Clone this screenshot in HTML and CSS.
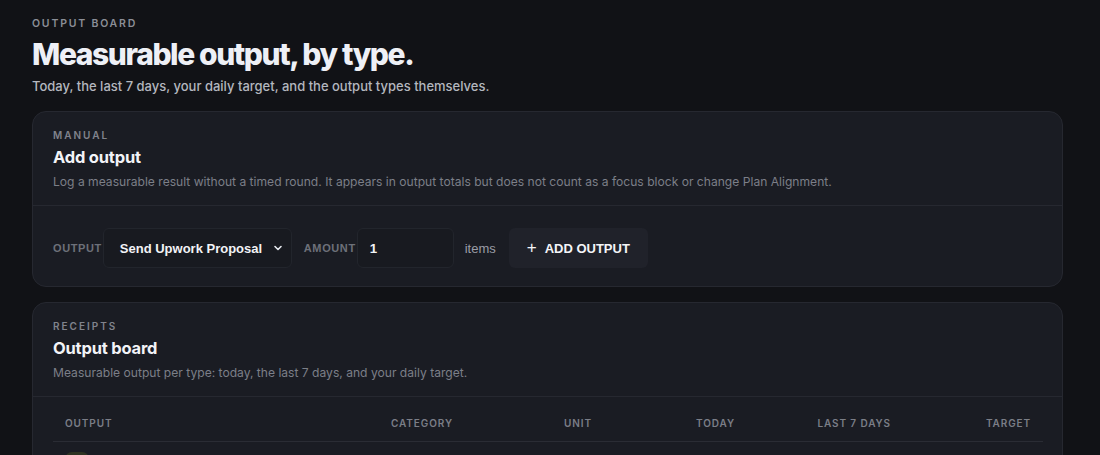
FILE: index.html
```html
<!DOCTYPE html>
<html lang="en">
<head>
<meta charset="utf-8">
<title>Output board</title>
<link rel="stylesheet" href="styles.css">
</head>
<body>
<main class="page">
  <header class="page-head">
    <div class="eyebrow">OUTPUT BOARD</div>
    <h1 class="title">Measurable output, by type.</h1>
    <p class="subtitle">Today, the last 7 days, your daily target, and the output types themselves.</p>
  </header>

  <section class="card">
    <div class="card-head">
      <div class="eyebrow small">MANUAL</div>
      <h2 class="card-title">Add output</h2>
      <p class="card-desc">Log a measurable result without a timed round. It appears in output totals but does not count as a focus block or change Plan Alignment.</p>
    </div>
    <div class="card-body form-row">
      <label class="field-label">OUTPUT</label>
      <div class="select">
        <span>Send Upwork Proposal</span>
        <svg class="chev" width="10" height="10" viewBox="0 0 10 10"><path d="M2 3.5 L5 6.5 L8 3.5" fill="none" stroke="#e6e8ee" stroke-width="1.6" stroke-linecap="round" stroke-linejoin="round"/></svg>
      </div>
      <label class="field-label amount-label">AMOUNT</label>
      <div class="input">1</div>
      <span class="unit">items</span>
      <button class="btn"><span class="plus">+</span>ADD OUTPUT</button>
    </div>
  </section>

  <section class="card">
    <div class="card-head">
      <div class="eyebrow small">RECEIPTS</div>
      <h2 class="card-title">Output board</h2>
      <p class="card-desc">Measurable output per type: today, the last 7 days, and your daily target.</p>
    </div>
    <div class="card-body table-wrap">
      <div class="table">
        <div class="th">OUTPUT</div>
        <div class="th">CATEGORY</div>
        <div class="th">UNIT</div>
        <div class="th right">TODAY</div>
        <div class="th right">LAST 7 DAYS</div>
        <div class="th right">TARGET</div>
        <div class="td"><span class="type-icon"></span></div>
        <div class="td"></div>
        <div class="td"></div>
        <div class="td"></div>
        <div class="td"></div>
        <div class="td"></div>
      </div>
    </div>
  </section>
</main>
</body>
</html>
```

FILE: styles.css
```css
* { box-sizing: border-box; }
html, body { margin: 0; padding: 0; }
body {
  background: #111216;
  color: #eef0f5;
  font-family: Inter, "Noto Sans", sans-serif;
  overflow: hidden;
}
.page {
  padding: 17px 37px 40px 32px;
  display: flex;
  flex-direction: column;
  gap: 15px;
}
.page-head { display: flex; flex-direction: column; }
.eyebrow {
  font-size: 10.5px;
  font-weight: 600;
  letter-spacing: 1.8px;
  color: #8b8e97;
  line-height: 14px;
}
.title {
  margin: 5px 0 0;
  font-size: 30px;
  font-weight: 800;
  letter-spacing: -1.4px;
  line-height: 36px;
  color: #eef0f6;
}
.subtitle {
  margin: 5px 0 1px;
  font-size: 13px;
  line-height: 18px;
  color: #b4b7bf;
  font-weight: 500;
}
.card {
  background: #1a1c23;
  border: 1px solid #262830;
  border-radius: 14px;
}
.card-head {
  padding: 16px 20px 14px;
  border-bottom: 1px solid #262830;
}
.eyebrow.small { font-size: 10px; letter-spacing: 2px; color: #80838c; }
.card-title {
  margin: 4px 0 0;
  font-size: 16.5px;
  font-weight: 700;
  letter-spacing: -0.2px;
  line-height: 22px;
  color: #f2f3f7;
}
.card-desc {
  margin: 5px 0 0;
  font-size: 12.1px;
  line-height: 18px;
  color: #7c7f88;
}
.form-row {
  display: flex;
  align-items: center;
  padding: 22px 20px 18px;
}
.field-label {
  font-family: "Liberation Sans", Arial, sans-serif;
  font-size: 11px;
  font-weight: 700;
  letter-spacing: 0.6px;
  color: #6d7079;
  margin-right: 1px;
}
.amount-label { margin-left: 12px; margin-right: 1px; }
.select {
  width: 189px;
  height: 40px;
  display: flex;
  align-items: center;
  justify-content: space-between;
  padding: 0 8px 0 16px;
  background: #181a20;
  border: 1px solid #22252c;
  border-radius: 6px;
  font-family: "Liberation Sans", Arial, sans-serif;
  font-size: 13px;
  font-weight: 700;
  color: #f2f3f6;
}
.chev { display: block; }
.input {
  width: 97px;
  height: 40px;
  display: flex;
  align-items: center;
  padding: 0 12px;
  background: #181a20;
  border: 1px solid #22252c;
  border-radius: 6px;
  font-family: "Liberation Sans", Arial, sans-serif;
  font-size: 13.3px;
  font-weight: 700;
  color: #f2f3f6;
}
.unit {
  margin-left: 11px;
  font-family: "Liberation Sans", Arial, sans-serif;
  font-size: 13px;
  color: #9a9da6;
}
.btn {
  margin-left: 13px;
  height: 40px;
  width: 139px;
  display: flex;
  align-items: center;
  justify-content: center;
  gap: 8px;
  background: #20222a;
  border: none;
  border-radius: 6px;
  font-family: "Liberation Sans", Arial, sans-serif;
  font-size: 13px;
  font-weight: 700;
  color: #f4f5f8;
  padding: 0;
}
.plus { font-weight: 400; font-size: 17px; line-height: 1; margin-top: -2px; }
.table-wrap { padding: 0 20px; }
.table {
  display: grid;
  grid-template-columns: 326px 173px 88px 107px 156px 140px;
}
.th {
  padding: 20px 12px 11px;
  font-size: 10px;
  font-weight: 600;
  letter-spacing: 0.9px;
  color: #7b7e87;
  line-height: 13px;
  border-bottom: 1px solid #2a2c34;
}
.right { text-align: right; }
.td {
  height: 56px;
  padding: 10px 12px;
  border-bottom: 1px solid #23252c;
}
.type-icon {
  display: block;
  width: 24px;
  height: 24px;
  border-radius: 7px;
  background: #2e3322;
}
```
